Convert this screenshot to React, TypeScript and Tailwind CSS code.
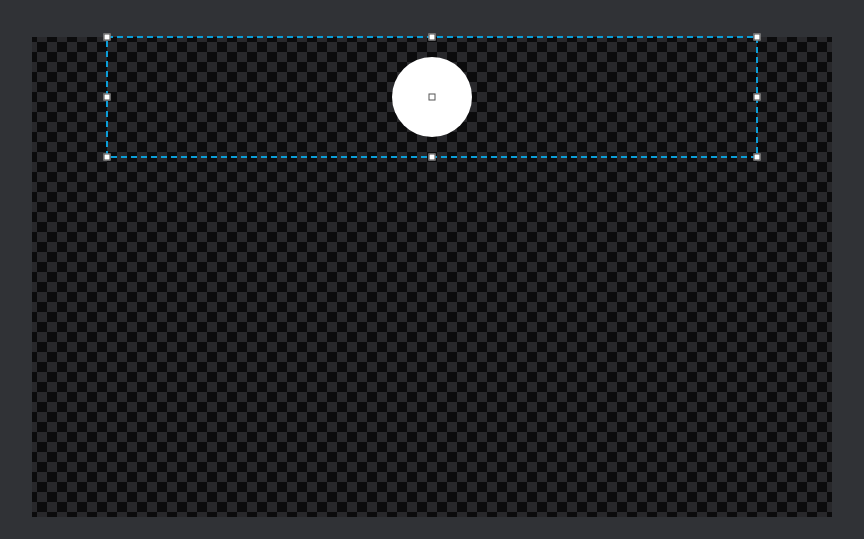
import React from 'react';

// 10px checker, phase taken from the reference (first full cell starts 5px in)
const checker = {
  backgroundImage:
    'conic-gradient(#28282b 25%, #0b0b0c 0 50%, #28282b 0 75%, #0b0b0c 0)',
  backgroundSize: '20px 20px',
  backgroundPosition: '-5px -5px',
};

// handle positions on the selection box, in percent
const handles = [
  [0, 0], [50, 0], [100, 0],
  [0, 50], [100, 50],
  [0, 100], [50, 100], [100, 100],
];

function Handle({ x, y }: { x: number; y: number }) {
  return (
    <div
      className="absolute h-[7px] w-[7px] -translate-x-1/2 -translate-y-1/2 border border-[#4a4a4a] bg-white"
      style={{ left: `${x}%`, top: `${y}%` }}
    />
  );
}

export default function App() {
  return (
    <div className="flex h-[539px] w-[864px] items-start bg-[#303236] pl-[32px] pt-[37px] font-['Liberation_Sans',sans-serif]">
      <div className="relative h-[480px] w-[800px]" style={checker}>
        {/* selection */}
        <div className="absolute left-[75px] top-0 h-[120px] w-[650px]">
          <svg className="absolute inset-0 overflow-visible" width="650" height="120">
            <rect
              x="0"
              y="0"
              width="650"
              height="120"
              fill="none"
              stroke="#0b9ed8"
              strokeWidth="2"
              strokeDasharray="6 4"
            />
          </svg>
          <div className="absolute left-[285px] top-[20px] h-[80px] w-[80px] rounded-full bg-white" />
          <div className="absolute left-1/2 top-1/2 h-[7px] w-[7px] -translate-x-1/2 -translate-y-1/2 border border-[#555] bg-white" />
          {handles.map(([x, y], i) => (
            <Handle key={i} x={x} y={y} />
          ))}
        </div>
      </div>
    </div>
  );
}
